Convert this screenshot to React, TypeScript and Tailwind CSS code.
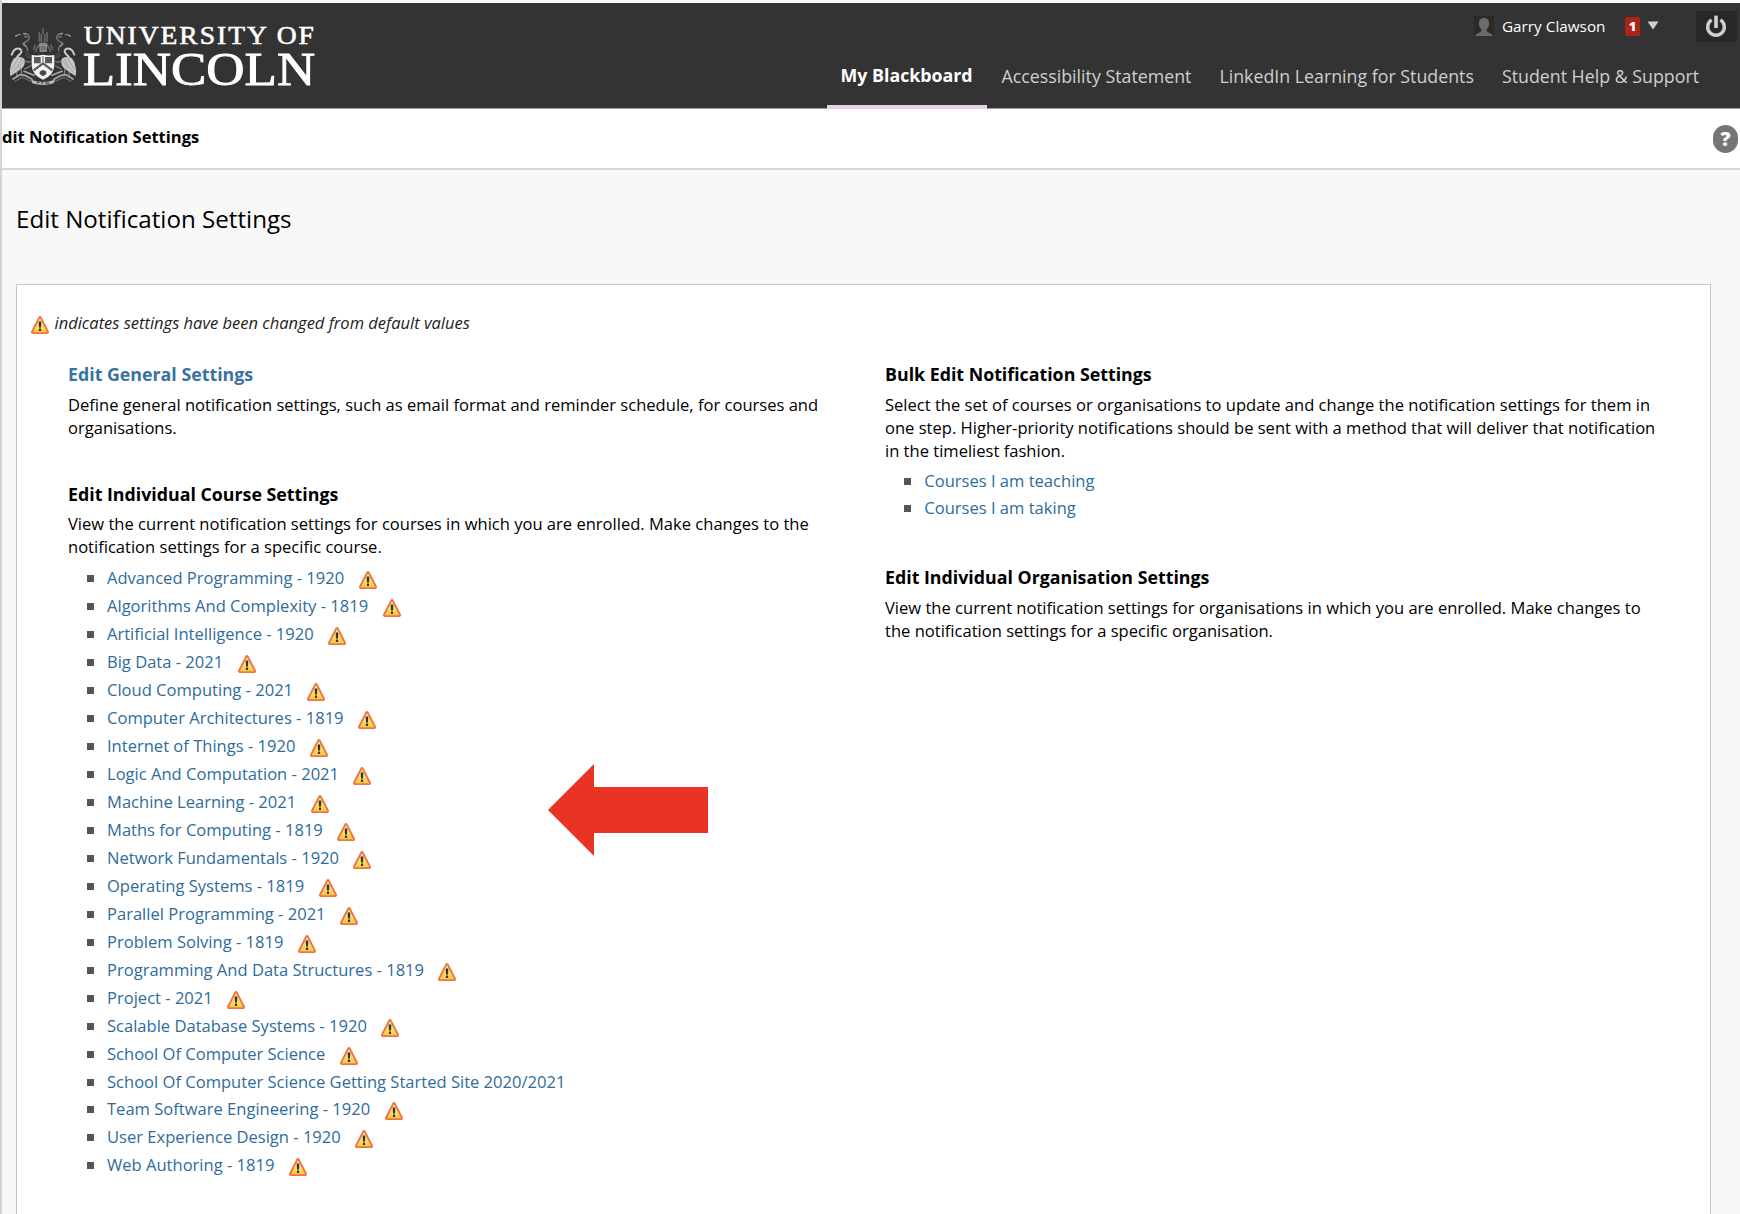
import React from 'react';

type Course = { name: string; changed: boolean };

const courses: Course[] = [
  { name: 'Advanced Programming - 1920', changed: true },
  { name: 'Algorithms And Complexity - 1819', changed: true },
  { name: 'Artificial Intelligence - 1920', changed: true },
  { name: 'Big Data - 2021', changed: true },
  { name: 'Cloud Computing - 2021', changed: true },
  { name: 'Computer Architectures - 1819', changed: true },
  { name: 'Internet of Things - 1920', changed: true },
  { name: 'Logic And Computation - 2021', changed: true },
  { name: 'Machine Learning - 2021', changed: true },
  { name: 'Maths for Computing - 1819', changed: true },
  { name: 'Network Fundamentals - 1920', changed: true },
  { name: 'Operating Systems - 1819', changed: true },
  { name: 'Parallel Programming - 2021', changed: true },
  { name: 'Problem Solving - 1819', changed: true },
  { name: 'Programming And Data Structures - 1819', changed: true },
  { name: 'Project - 2021', changed: true },
  { name: 'Scalable Database Systems - 1920', changed: true },
  { name: 'School Of Computer Science', changed: true },
  { name: 'School Of Computer Science Getting Started Site 2020/2021', changed: false },
  { name: 'Team Software Engineering - 1920', changed: true },
  { name: 'User Experience Design - 1920', changed: true },
  { name: 'Web Authoring - 1819', changed: true },
];

function WarningIcon({ className = '' }: { className?: string }) {
  return (
    <svg viewBox="0 0 18 18" className={`h-[18px] w-[18px] shrink-0 ${className}`} aria-hidden="true">
      <defs>
        <linearGradient id="warn" x1="0" y1="0" x2="0" y2="1">
          <stop offset="0" stopColor="#fbeea0" />
          <stop offset="1" stopColor="#f9cb3c" />
        </linearGradient>
      </defs>
      <path d="M8.2 1.6 Q9 0.5 9.8 1.6 L17 15.8 Q17.2 17.1 16 17.1 H2 Q0.8 17.1 1 15.8 Z" fill="url(#warn)" stroke="#ef7446" strokeWidth="1.9" strokeLinejoin="round" />
      <path d="M7.7 5.4 H10.3 L10 11.4 H8 Z" fill="#2f3434" />
      <rect x="7.9" y="12.6" width="2.2" height="2.4" rx="0.5" fill="#2f3434" />
    </svg>
  );
}

function Bird() {
  return (
    <g fill="none" strokeLinecap="round" strokeLinejoin="round">
      <path d="M36 48 Q42 42 50 44 M60 40 Q74 41 76 52 Q74 63 61 67 Q53 71 62 77 Q72 82 70 92" stroke="#747474" strokeWidth="4.5" />
      <path d="M34 49 L42 45 M58 41 L66 43 M70 51 L62 50 M60 70 L66 79" stroke="#c4c4c4" strokeWidth="2.2" />
      <path d="M23 104 L29 92 Q38 83 48 87 Q57 94 47 103 Q37 110 35 121" stroke="#cccccc" strokeWidth="6" />
      <path d="M30 115 Q49 106 61 116 Q66 131 54 145 L37 157 L19 169 Q15 149 22 129 Z" fill="#c6c6c6" />
      <path d="M53 117 Q45 136 25 158 M43 115 Q34 131 22 149 M59 122 L42 145" stroke="#8b8b8b" strokeWidth="1.8" />
      <path d="M66 98 L78 106 M64 105 L79 114" stroke="#5c5c5c" strokeWidth="3" />
      <path d="M51 146 L53 162 M39 156 L38 168 M64 124 Q73 129 79 124 M62 147 L79 138" stroke="#8a8a8a" strokeWidth="3.5" />
      <path d="M27 177 L48 164 L62 166 L84 178 M60 154 L90 166" stroke="#a8a8a8" strokeWidth="5" />
      <path d="M33 184 L54 172 L80 184" stroke="#6c6c6c" strokeWidth="3.5" />
    </g>
  );
}

function Crest() {
  return (
    <svg viewBox="0 0 240 210" className="h-[70px] w-[80px]" aria-hidden="true">
      <Bird />
      <g transform="translate(234 0) scale(-1 1)">
        <Bird />
      </g>
      <g fill="none" stroke="#666666" strokeWidth="5">
        <path d="M117 25 V42 M106 36 V66 M112 42 V68 M122 42 V68 M129 36 V66" />
        <path d="M94 96 Q99 74 117 70 Q135 74 140 96 M88 90 L94 74 M146 90 L140 74" />
      </g>
      <path d="M105 70 H130 L128 96 H107 Z" fill="#8b8b8b" />
      <path d="M113 78 V91 M118 78 V91 M123 78 V91" stroke="#4a4a4a" strokeWidth="2" />
      <path d="M83 105 Q101 108 117 104 Q134 108 151 105 V137 Q149 166 117 179 Q85 166 83 137 Z" fill="#f2f2f2" />
      <path d="M90 111 H110 V130 H90 Z M123 111 H144 V130 H123 Z" fill="#595959" />
      <path d="M89 151 L117 130 L145 151" fill="none" stroke="#5b5b5b" strokeWidth="7" />
      <path d="M117 108 V130" stroke="#8a8a8a" strokeWidth="4" />
      <path d="M107 155 Q117 145 127 155 V162 L117 169 L107 162 Z" fill="#484848" />
      <path d="M81 179 Q117 193 153 179 L149 190 Q117 200 85 190 Z" fill="#bdbdbd" />
      <path d="M98 188 H106 M111 189 H118 M124 189 H136" stroke="#555" strokeWidth="4" />
    </svg>
  );
}

function Logo() {
  return (
    <div className="flex pl-[2px] pt-[17px]">
      <Crest />
      <svg viewBox="0 0 236 80" className="-ml-px h-20 w-[236px] font-['Liberation_Serif',serif]" fill="#fff" stroke="#fff">
        <text x="0.8" y="24.2" fontSize="25" strokeWidth="0.6" textLength="232" lengthAdjust="spacingAndGlyphs" letterSpacing="1.8">UNIVERSITY OF</text>
        <text x="-0.3" y="64.6" fontSize="46" strokeWidth="0.9" textLength="232.5" lengthAdjust="spacingAndGlyphs">LINCOLN</text>
      </svg>
    </div>
  );
}

const tabClass = 'flex h-full items-start px-[14px] pt-[4px] leading-[26px]';

function Header() {
  return (
    <header className="flex h-[106px] justify-between border-b border-[#a09c9c] bg-[#333333] text-white">
      <Logo />
      <div className="flex flex-col items-end">
        <div className="flex h-[56px] items-start pr-[3px]">
          <div className="mt-[13px] h-5 w-5 bg-[#292929]">
            <svg viewBox="0 0 20 20" className="h-5 w-5" fill="#6b6b6b" aria-hidden="true">
              <path d="M10 2 C13.6 2 15.4 4.4 15.2 7.6 C15 10.6 13.9 12.3 12.5 13.6 C12.4 15.6 13.4 16.2 16 17.2 C17.6 17.9 18.6 18.6 19.2 20 H0.8 C1.4 18.6 2.4 17.9 4 17.2 C6.6 16.2 7.6 15.6 7.5 13.6 C6.1 12.3 5 10.6 4.8 7.6 C4.6 4.4 6.4 2 10 2 Z" />
            </svg>
          </div>
          <span className="ml-2 mt-[11px] w-[103px] whitespace-nowrap text-[15.3px] leading-6">Garry Clawson</span>
          <span className="ml-5 mt-[14px] flex h-[19px] w-[15px] items-center justify-center rounded-[2px] bg-[#ae2218] text-[13px] font-extrabold leading-none">1</span>
          <svg viewBox="0 0 12 9" className="ml-[7px] mt-[18px] h-[9px] w-3" aria-hidden="true">
            <path d="M0.5 0.5 H11.5 L6 8.5 Z" fill="#cfcfcf" />
          </svg>
          <div className="ml-[37px] mt-2 flex h-[31px] w-[41px] items-start justify-center bg-[#282828] pr-[2px] pt-1">
            <svg viewBox="0 0 22 24" className="h-6 w-[22px]" fill="none" stroke="#d0d0d0" aria-hidden="true">
              <path d="M6.6 4.9 A8.3 8.3 0 1 0 15.4 4.9" strokeWidth="3.4" />
              <path d="M11 0.6 V13" strokeWidth="3.6" />
            </svg>
          </div>
        </div>
        <nav className="-mb-px flex h-[50px] whitespace-nowrap pr-[27px] text-[17.8px] text-[#cfcfcf]">
          <div className="mr-px flex h-full w-[160px] items-start border-b-4 border-[#e4d1ea] pl-[14px] pt-[3px] font-bold leading-[26px] text-white">My Blackboard</div>
          <div className={tabClass}>Accessibility Statement</div>
          <div className={tabClass}>LinkedIn Learning for Students</div>
          <div className={tabClass}>Student Help &amp; Support</div>
        </nav>
      </div>
    </header>
  );
}

function Bullet() {
  return <span className="h-[7px] w-[7px] shrink-0 bg-[#555555]" />;
}

function Heading({ children, link = false }: { children: React.ReactNode; link?: boolean }) {
  return (
    <h2 className={`mb-[6.5px] text-[17.8px] font-bold leading-6 ${link ? 'text-[#38739f]' : 'text-black'}`}>{children}</h2>
  );
}

function Para({ lines }: { lines: string[] }) {
  return (
    <p className="whitespace-nowrap leading-[23px]">
      {lines.map((line) => (
        <span key={line} className="block">{line}</span>
      ))}
    </p>
  );
}

export default function App() {
  return (
    <div className="h-[1214px] w-[1740px] overflow-hidden border-l-2 border-[#d4d4d4] bg-[#f8f8f8] pt-[3px] font-['Open_Sans',sans-serif] text-[16.565px] text-black">
      <Header />
      <div className="flex h-[61px] items-start justify-between border-b-2 border-[#d7d7d7] bg-white pr-[2px] pt-4">
        <div className="whitespace-nowrap font-bold leading-6">dit Notification Settings</div>
        <div className="flex h-7 w-[25px] items-center justify-center rounded-full bg-[#757575] text-[20px] font-extrabold leading-none text-white">?</div>
      </div>

      <h1 className="pl-[14px] pt-[33px] text-[24.15px] leading-8">Edit Notification Settings</h1>

      <main className="relative ml-[14px] mt-[49px] h-[960px] w-[1695px] border border-[#c6c6c6] bg-white">
        <div className="flex items-start pl-[14px] pt-[26px] text-[16.5px] italic leading-6 text-[#222222]">
          <WarningIcon className="mt-[5px]" />
          <span className="ml-[5.5px]">indicates settings have been changed from default values</span>
        </div>

        <div className="flex pl-[51px] pt-[27px]">
          <section className="w-[817px]">
            <Heading link>Edit General Settings</Heading>
            <Para
              lines={[
                'Define general notification settings, such as email format and reminder schedule, for courses and',
                'organisations.',
              ]}
            />
            <div className="h-[43px]" />
            <Heading>Edit Individual Course Settings</Heading>
            <Para
              lines={[
                'View the current notification settings for courses in which you are enrolled. Make changes to the',
                'notification settings for a specific course.',
              ]}
            />
            <ul className="mt-[6px] pl-[18.5px]">
              {courses.map((course) => (
                <li key={course.name} className={`flex items-center text-[#2f6c9b] ${course.changed ? 'h-7' : 'h-[27px] pt-px'}`}>
                  <Bullet />
                  <span className="ml-[13.5px] whitespace-nowrap">{course.name}</span>
                  {course.changed && <WarningIcon className="ml-[14.4px] mt-[4px]" />}
                </li>
              ))}
            </ul>
          </section>

          <section>
            <Heading>Bulk Edit Notification Settings</Heading>
            <Para
              lines={[
                'Select the set of courses or organisations to update and change the notification settings for them in',
                'one step. Higher-priority notifications should be sent with a method that will deliver that notification',
                'in the timeliest fashion.',
              ]}
            />
            <ul className="mt-[6.5px] pl-[19px]">
              {['Courses I am teaching', 'Courses I am taking'].map((name) => (
                <li key={name} className="flex h-[27px] items-center text-[#2f6c9b]">
                  <Bullet />
                  <span className="ml-[13.3px]">{name}</span>
                </li>
              ))}
            </ul>
            <div className="h-[43px]" />
            <Heading>Edit Individual Organisation Settings</Heading>
            <Para
              lines={[
                'View the current notification settings for organisations in which you are enrolled. Make changes to',
                'the notification settings for a specific organisation.',
              ]}
            />
          </section>
        </div>

        {/* Callout arrow laid over the course list */}
        <svg viewBox="0 0 160 92" className="absolute left-[531px] top-[479px] h-[92px] w-[160px]" aria-hidden="true">
          <path d="M0 46 L46 0 V23 H160 V69 H46 V92 Z" fill="#e93323" />
        </svg>
      </main>
    </div>
  );
}
